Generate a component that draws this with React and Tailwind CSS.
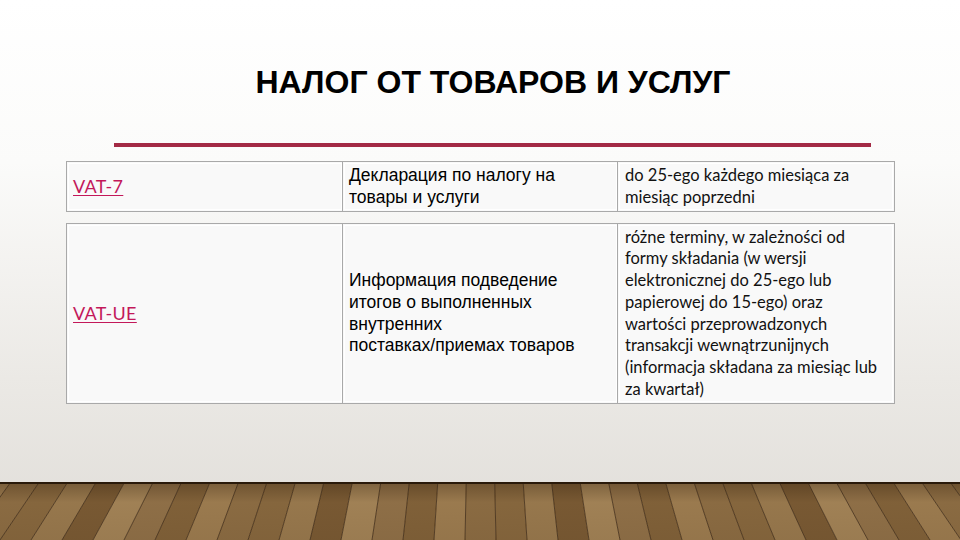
import React from 'react';

const rows = [
  {
    code: 'VAT-7',
    name: 'Декларация по налогу на товары и услуги',
    term: 'do 25-ego każdego miesiąca za miesiąc poprzedni',
    h: 'h-[51px]',
  },
  {
    code: 'VAT-UE',
    name: 'Информация подведение итогов о выполненных внутренних поставках/\u2060приемах товаров',
    term:
      'różne terminy, w zależności od formy składania (w wersji elektronicznej do 25-ego lub papierowej do 15-ego) oraz wartości przeprowadzonych transakcji wewnątrzunijnych (informacja składana za miesiąc lub za kwartał)',
    h: 'h-[181px]',
  },
];

const plankColors = ['#8a6a40', '#9c7c50', '#7c5c35', '#a68659', '#93734a', '#84643b', '#a07f52', '#8f6f45'];

function Floor() {
  // planks converge toward a far vanishing point above the middle
  const vx = 480;
  const vy = -650;
  const top = (xb) => xb + (vx - xb) * (58 / (58 - vy));
  const planks = [];
  const lines = [];
  for (let i = -20; i <= 45; i++) {
    const a = i * 31;
    const b = a + 31;
    planks.push(
      <polygon
        key={'p' + i}
        points={`${a},58 ${b},58 ${top(b)},0 ${top(a)},0`}
        fill={plankColors[((i % 8) + 8) % 8]}
      />
    );
    lines.push(
      <line key={'l' + i} x1={a} y1={58} x2={top(a)} y2={0} stroke="#3e2812" strokeWidth="1" opacity="0.75" />
    );
  }
  return (
    <svg width="960" height="58" viewBox="0 0 960 58" className="block">
      <defs>
        <linearGradient id="shade" x1="0" y1="0" x2="0" y2="1">
          <stop offset="0" stopColor="#2e1c0a" stopOpacity="0.35" />
          <stop offset="0.35" stopColor="#2e1c0a" stopOpacity="0.05" />
          <stop offset="1" stopColor="#2e1c0a" stopOpacity="0.1" />
        </linearGradient>
      </defs>
      {planks}
      {lines}
      <rect width="960" height="58" fill="url(#shade)" />
      <rect width="960" height="2" fill="#2a1a0a" />
    </svg>
  );
}

export default function App() {
  return (
    <div className="w-[960px] h-[540px] overflow-hidden flex flex-col bg-[linear-gradient(180deg,#ffffff_0%,#fbfbfa_30%,#ebe9e5_70%,#e0ddd8_100%)]">
      <div className="h-[482px] flex flex-col">
        <h1 className="mt-[63px] h-[38px] text-center text-[32px] font-bold text-black leading-[38px] font-['Liberation_Sans',Arial,sans-serif] pl-[26px]">
          НАЛОГ ОТ ТОВАРОВ И УСЛУГ
        </h1>
        <div className="mt-[42px] ml-[114px] w-[757px] h-[4px] bg-[#a32a45]" />
        <div className="mt-[14px] ml-[66px] w-[829px] flex flex-col gap-[11px]">
          {rows.map((r) => (
            <div
              key={r.code}
              className={`grid grid-cols-[276px_275px_1fr] ${r.h} border border-[#a9a9a9] bg-[#f9f9f9]`}
            >
              <div className="flex items-center px-[6px] border-r border-[#a9a9a9] outline outline-1 outline-white -outline-offset-2">
                <span className="text-[18px] text-[#c3185a] underline underline-offset-[2px] font-['Lato','Open_Sans',sans-serif] tracking-[0.3px]">
                  {r.code}
                </span>
              </div>
              <div className="flex items-center pl-[6px] border-r border-[#a9a9a9] outline outline-1 outline-white -outline-offset-2">
                <p className="w-[242px] text-[17.5px] leading-[21.7px] text-black font-['Liberation_Sans',Arial,sans-serif]">{r.name}</p>
              </div>
              <div className="flex items-center pl-[7px] outline outline-1 outline-white -outline-offset-2">
                <p className="w-[260px] text-[16.5px] leading-[21.7px] text-[#111] font-['Lato','Open_Sans',sans-serif]">{r.term}</p>
              </div>
            </div>
          ))}
        </div>
      </div>
      <Floor />
    </div>
  );
}
